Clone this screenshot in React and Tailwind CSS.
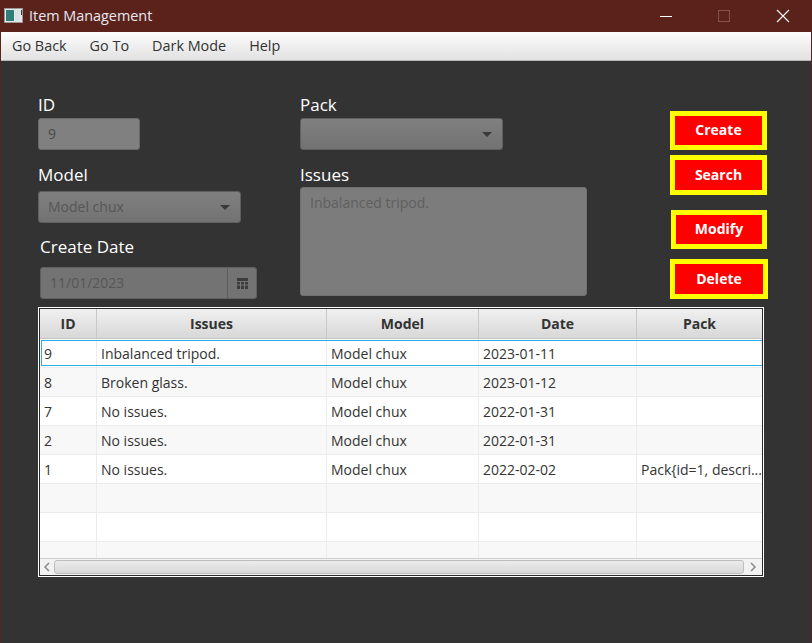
import React from 'react';

const font = "font-['Open_Sans','Noto_Sans',sans-serif]";

const columns = [
    { name: 'ID', width: 'w-[57px]' },
    { name: 'Issues', width: 'w-[230px]' },
    { name: 'Model', width: 'w-[152px]' },
    { name: 'Date', width: 'w-[158px]' },
    { name: 'Pack', width: 'flex-1' },
];

const rows = [
    ['9', 'Inbalanced tripod.', 'Model chux', '2023-01-11', ''],
    ['8', 'Broken glass.', 'Model chux', '2023-01-12', ''],
    ['7', 'No issues.', 'Model chux', '2022-01-31', ''],
    ['2', 'No issues.', 'Model chux', '2022-01-31', ''],
    ['1', 'No issues.', 'Model chux', '2022-02-02', 'Pack{id=1, descri...'],
    ['', '', '', '', ''],
    ['', '', '', '', ''],
    ['', '', '', '', ''],
];

function Caret() {
    return <span className="w-0 h-0 border-x-[5px] border-x-transparent border-t-[5px] border-t-[#3a3a3a] shrink-0"></span>;
}

function Label({ children, className = '' }) {
    return <div className={`text-white text-[17px] leading-[22px] ${className}`}>{children}</div>;
}

function ComboBox({ value, className = '' }) {
    return (
        <div className={`h-8 rounded-[3px] border border-[#5f5f5f] bg-gradient-to-b from-[#808080] to-[#727272] flex items-center justify-between pl-[9px] pr-[10px] text-[14px] text-[#565656] ${className}`}>
            <span className="pb-[2px]">{value}</span>
            <Caret />
        </div>
    );
}

function ActionButton({ label, className = '' }) {
    return (
        <button className={`border-[5px] border-[#ffff00] bg-[#ff0000] text-white text-[14px] font-bold flex items-center justify-center ${className}`}>
            {label}
        </button>
    );
}

function WindowBar() {
    return (
        <div className="h-8 bg-[#5a221b] flex items-center shrink-0">
            <svg width="20" height="16" viewBox="0 0 20 16" className="ml-1 shrink-0">
                <rect x="0.5" y="0.5" width="18" height="14" fill="#e8e8e8" stroke="#9a9a9a" />
                <rect x="2" y="2" width="8" height="11" fill="#2f7f78" />
                <rect x="11" y="2" width="5" height="11" fill="#d9e3e6" />
                <rect x="17" y="2" width="1" height="5" fill="#333333" />
            </svg>
            <span className="ml-[5px] text-[14.4px] text-[#e8e8f0]">Item Management</span>
            <div className="ml-auto flex items-center">
                <span className="w-3 h-px bg-white mr-[46px]"></span>
                <span className="w-3 h-3 border border-[#83554f] mr-[46px]"></span>
                <svg width="14" height="14" viewBox="0 0 14 14" className="mr-[22px]">
                    <path d="M1 1 L13 13 M13 1 L1 13" stroke="#f2f2f2" strokeWidth="1.2" />
                </svg>
            </div>
        </div>
    );
}

function MenuBar() {
    return (
        <div className="h-[29px] mx-px shrink-0 bg-gradient-to-b from-[#fcfcfc] to-[#e2e2e2] border-b border-[#b8b8b8] flex items-center text-[14.4px] text-[#333333] pl-[11px]">
            <span className="mr-[23px]">Go Back</span>
            <span className="mr-[23px]">Go To</span>
            <span className="mr-[23px]">Dark Mode</span>
            <span>Help</span>
        </div>
    );
}

function ItemTable() {
    return (
        <div className="w-[726px] h-[270px] border border-white bg-[#2b2b2b] p-px">
            <div className="h-full bg-white flex flex-col overflow-hidden">
                <div className="h-[30px] shrink-0 flex bg-gradient-to-b from-[#f0f0f0] to-[#d8d8d8] border-b border-[#c4c4c4]">
                    {columns.map((col) => (
                        <div key={col.name} className={`${col.width} border-r border-[#c8c8c8] last:border-r-0 flex items-center justify-center text-[14px] font-bold text-[#333333]`}>
                            {col.name}
                        </div>
                    ))}
                </div>
                <div className="flex-1 overflow-hidden">
                    {rows.map((row, i) => (
                        <div
                            key={i}
                            className={`relative h-[29px] flex border-b border-[#ececec] ${i % 2 === 1 ? 'bg-[#f8f8f8]' : 'bg-white'}`}
                        >
                            {row.map((cell, j) => (
                                <div key={j} className={`${columns[j].width} pl-[4px] border-r border-[#ececec] last:border-r-0 flex items-center text-[14px] text-[#333333] whitespace-nowrap overflow-hidden`}>
                                    {cell}
                                </div>
                            ))}
                            {i === 0 && (
                                <>
                                    <div className="absolute top-px left-px right-0 h-px bg-[#2aaee0]"></div>
                                    <div className="absolute bottom-px left-px right-0 h-px bg-[#2aaee0]"></div>
                                    <div className="absolute top-px bottom-px left-px w-px bg-[#2aaee0]"></div>
                                </>
                            )}
                        </div>
                    ))}
                </div>
                <div className="h-[17px] shrink-0 bg-[#f2f2f2] border-t border-[#d0d0d0] flex items-center">
                    <svg width="14" height="14" viewBox="0 0 14 14" className="shrink-0">
                        <path d="M9 3 L5 7 L9 11" fill="none" stroke="#8a8a8a" strokeWidth="1.5" />
                    </svg>
                    <div className="flex-1 h-[14px] rounded-[3px] border border-[#bdbdbd] bg-gradient-to-b from-[#ececec] to-[#d8d8d8]"></div>
                    <svg width="18" height="14" viewBox="0 0 18 14" className="shrink-0">
                        <path d="M7 3 L11 7 L7 11" fill="none" stroke="#8a8a8a" strokeWidth="1.5" />
                    </svg>
                </div>
            </div>
        </div>
    );
}

export default function App() {
    return (
        <div className={`w-[812px] h-[643px] bg-[#333333] flex flex-col border-x border-[#5a221b] overflow-hidden ${font}`}>
            <div className="-mx-px flex flex-col">
                <WindowBar />
                <MenuBar />
            </div>
            <div className="flex h-[246px] pl-[37px]">
                <div className="w-[262px] flex flex-col pt-[33px]">
                    <Label>ID</Label>
                    <div className="mt-[2px] w-[102px] h-8 rounded-[3px] border border-[#696969] bg-[#808080] flex items-center pl-[9px] pb-[2px] text-[14px] text-[#4a4a4a]">9</div>
                    <Label className="mt-[14px]">Model</Label>
                    <ComboBox value="Model chux" className="w-[203px] mt-[5px]" />
                    <Label className="mt-[13px] ml-[2px]">Create Date</Label>
                    <div className="mt-[9px] ml-[2px] w-[217px] h-8 rounded-[3px] border border-[#5f5f5f] bg-[#737373] flex items-center text-[14px] text-[#565656]">
                        <span className="flex-1 pl-[9px] pb-[2px]">11/01/2023</span>
                        <span className="w-[29px] h-full border-l border-[#5f5f5f] flex items-center justify-center">
                            <svg width="11" height="11" viewBox="0 0 11 11">
                                <rect width="11" height="11" fill="#3c3c3c" />
                                <path d="M0 3.5H11M0 7H11M3.5 3V11M7.5 3V11" stroke="#808080" strokeWidth="0.8" />
                            </svg>
                        </span>
                    </div>
                </div>
                <div className="w-[287px] flex flex-col pt-[33px]">
                    <Label>Pack</Label>
                    <ComboBox value="" className="w-[203px] mt-[2px]" />
                    <Label className="mt-[14px]">Issues</Label>
                    <div className="mt-[1px] w-[287px] h-[109px] rounded-[3px] border border-[#6f6f6f] bg-[#7c7c7c] pl-[9px] pt-[4px] text-[14px] text-[#5f5f5f]">Inbalanced tripod.</div>
                </div>
                <div className="flex-1 flex flex-col items-start pl-[83px] pt-[50px]">
                    <ActionButton label="Create" className="w-[97px] h-[39px] pb-[2px]" />
                    <ActionButton label="Search" className="w-[97px] h-[40px] mt-[5px] pb-px" />
                    <ActionButton label="Modify" className="w-[96px] h-[39px] mt-[15px] ml-px pb-[2px]" />
                    <ActionButton label="Delete" className="w-[98px] h-[40px] mt-[10px] pb-px" />
                </div>
            </div>
            <div className="pl-[37px]">
                <ItemTable />
            </div>
        </div>
    );
}
